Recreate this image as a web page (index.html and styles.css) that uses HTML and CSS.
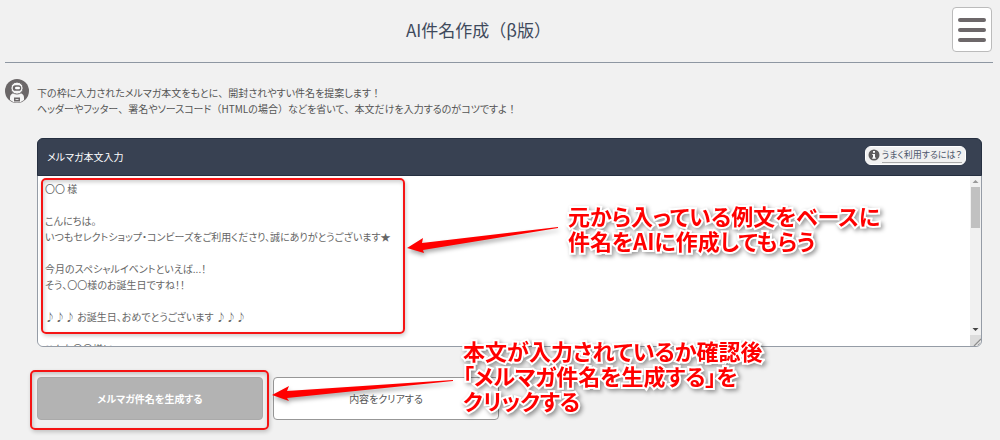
FILE: index.html
```html
<!DOCTYPE html>
<html lang="ja">
<head>
<meta charset="utf-8">
<meta name="viewport" content="width=device-width, initial-scale=1">
<title>AI件名作成（β版）</title>
<link rel="stylesheet" href="styles.css">
</head>
<body>
<header class="topbar">
  <h1 class="title">AI件名作成（β版）</h1>
  <button class="menu" type="button" aria-label="メニュー"><span class="bar"></span><span class="bar"></span><span class="bar"></span></button>
</header>
<main class="content">
  <div class="intro">
    <svg class="robot" viewBox="0 0 24 24" aria-hidden="true">
      <circle cx="12" cy="12" r="12" fill="#6b6768"/>
      <path d="M5 21v-2.500c0-2.600 1.800-4.200 4-4.200h6c2.200 0 4 1.600 4 4.200V21A11 11 0 0 1 5 21z" fill="#f5f5f5"/>
      <rect x="6" y="3.200" width="12" height="11.800" rx="5.600" fill="#f5f5f5" stroke="#6b6768"/>
      <rect x="7.800" y="6.200" width="8.400" height="5.600" rx="2.600" fill="#6b6768"/>
      <rect x="10" y="7.800" width="5" height="2.400" rx="1.200" fill="#fff"/>
      <path d="M9 18.500h6v4H9z" fill="#6b6768"/><path d="M10.500 20.500h3" stroke="#ddd"/>
    </svg>
    <p class="lead">下の枠に入力されたメルマガ本文をもとに<span class="full">、</span>開封されやすい件名を提案します<span class="full">！</span><br>ヘッダーやフッター<span class="full">、</span>署名やソースコード<span class="full">（</span>HTMLの場合<span class="full">）</span>などを省いて<span class="full">、</span>本文だけを入力するのがコツですよ<span class="full">！</span></p>
  </div>
  <section class="form">
    <div class="panel">
      <div class="panel-head">
        <label for="body-text">メルマガ本文入力</label>
        <a class="help" href="#help">
          <svg class="info" viewBox="0 0 12 12" aria-hidden="true"><circle cx="6" cy="6" r="5.500" fill="#5f5d5e"/><path d="M5 2h2v1.700H5zM4.300 5H7v3.500h.8v1.200H4.200V8.500H5V6h-.7z" fill="#fff"/></svg>
          <span class="help-text">うまく利用するには？</span>
        </a>
      </div>
      <div class="edit-row">
        <textarea id="body-text" class="editor" spellcheck="false">〇〇 様

こんにちは。
いつもセレクトショップ・コンビーズをご利用くださり、誠にありがとうございます★

今月のスペシャルイベントといえば...！
そう、〇〇様のお誕生日ですね！！

♪♪♪ お誕生日、おめでとうございます ♪♪♪

こんな〇〇様に、
当店から特別なプレゼントをご用意しました。

お誕生日月の間、
お好きな商品にご利用いただけます。

ぜひこの機会に、
お気に入りの商品を見つけてくださいね。
</textarea>
        <div class="scroller" aria-hidden="true">
          <svg class="step" viewBox="0 0 11 11"><path d="M2.500 7L5.500 4L8.500 7z" fill="#999"/></svg>
          <div class="track"><div class="thumb"></div></div>
          <svg class="step" viewBox="0 0 11 11"><path d="M2.500 4L5.500 7L8.500 4z" fill="#444"/></svg>
          <svg class="grip" viewBox="0 0 11 11"><path d="M0 0h11v6l-5 5H0z" fill="#dcdcdc"/><path d="M4 11L11 4M7.500 11L11 7.500" stroke="#8d8d8d" stroke-width="1.200"/></svg>
        </div>
      </div>
      <div class="mark mark-text"></div>
      <svg class="arrow arrow-text" viewBox="0 0 154 28" aria-hidden="true"><path d="M1 22L17 12L16 17L152 1V2L17 24L18 27z" fill="#f00"/></svg>
      <p class="note note-text">元から入っている例文をベースに<br>件名をAIに作成してもらう</p>
    </div>
    <div class="actions">
      <button class="btn primary" type="button">メルマガ件名を生成する</button>
      <button class="btn" type="button">内容をクリアする</button>
      <div class="mark mark-button"></div>
      <svg class="arrow arrow-button" viewBox="0 0 184 24" aria-hidden="true"><path d="M1 15L18 6L16 11L182 0V1L16 18L18 21z" fill="#f00"/></svg>
      <p class="note note-button">本文が入力されているか確認後<br>「メルマガ件名を生成する」を<br>クリックする</p>
    </div>
  </section>
</main>
</body>
</html>
```
FILE: styles.css
```css
* { box-sizing: border-box; }
body {
  margin: 0;
  background: #f1f1f1;
  color: #555;
  font-family: "Noto Sans CJK JP", "Noto Sans", sans-serif;
  font-feature-settings: "palt";
  font-size: 10px;
  line-height: 16px;
}
button, textarea { font: inherit; font-feature-settings: inherit; color: inherit; }
h1, p { margin: 0; }
.full { font-feature-settings: normal; }

.topbar {
  display: grid;
  grid-template-columns: 40px 1fr 40px;
  align-items: start;
  margin: 0 7px 0 5px;
  padding: 7px 1px 10px 0;
  border-bottom: 1px solid #8e97a2;
}
.title {
  grid-column: 2;
  padding: 11px 40px 0 0;
  text-align: center;
  color: #3f4a5c;
  font-size: 17px;
  line-height: 24px;
  font-weight: 400;
  font-feature-settings: normal;
}
.menu {
  display: flex;
  flex-direction: column;
  align-items: center;
  justify-content: center;
  gap: 6px;
  height: 45px;
  padding: 0;
  background: #fff;
  border: 1px solid #bbb;
  border-radius: 4px;
}
.bar { width: 28px; height: 4px; border-radius: 2px; background: #6d686a; }

.content { padding: 15px 18px 20px 5px; }
.intro { display: flex; gap: 8px; }
.robot { width: 24px; height: 24px; flex: none; margin-top: 1px; }
.lead { padding-top: 7px; }

.form { margin: 21px 0 0 32px; }
.panel {
  position: relative;
  border: 1px solid #959ca6;
  border-radius: 6px;
  background: #fff;
}
.panel-head {
  display: flex;
  align-items: center;
  justify-content: space-between;
  height: 38px;
  margin: -1px -1px 0;
  padding: 0 15px 0 9px;
  border: 1px solid #252f40;
  border-radius: 6px 6px 0 0;
  background: #384152;
  color: #fff;
}
.help {
  display: flex;
  align-items: center;
  gap: 2px;
  height: 19px;
  margin-bottom: 4px;
  padding: 0 3px 0 2px;
  border: 1px solid #fff;
  border-radius: 6px;
  background: #f1f1f1;
  color: #4c576b;
  font-size: 9px;
  text-decoration: none;
}
.help-text { line-height: 14px; border-bottom: 1px solid #aaa; }
.info { width: 12px; height: 12px; }

.edit-row { display: flex; height: 170px; }
.editor {
  flex: 1;
  min-width: 0;
  padding: 5px 7px;
  border: 0;
  border-radius: 0 0 0 6px;
  outline: 0;
  background: #fff;
  color: #666;
  resize: none;
  scrollbar-width: none;
}
.scroller {
  display: flex;
  flex-direction: column;
  width: 11px;
  overflow: hidden;
  border-radius: 0 0 6px 0;
  background: #f1f1f1;
}
.step, .grip { width: 11px; height: 11px; flex: none; }
.track { flex: 1; padding: 0 1px; }
.thumb { height: 30%; background: #c1c1c1; }

.actions {
  position: relative;
  display: grid;
  grid-template-columns: 226px 226px;
  gap: 10px;
  margin-top: 30px;
}
.btn {
  height: 43px;
  padding: 0;
  border: 1px solid #979797;
  border-radius: 4px;
  background: #fff;
}
.primary { border-color: #aaa; background: #b3b3b3; color: #fff; font-weight: 700; }

.mark {
  position: absolute;
  border: 2px solid #f51414;
  border-radius: 5px;
  box-shadow: 1px 2px 4px #0003, inset 1px 2px 4px #0003;
  pointer-events: none;
}
.mark-text { left: 3px; top: 39px; width: 364px; height: 156px; }
.mark-button { left: -7px; top: -7px; width: 239px; height: 60px; }
.arrow { position: absolute; pointer-events: none; filter: drop-shadow(1px 3px 2px #0005); }
.arrow-text { left: 368px; top: 87px; width: 154px; height: 28px; }
.arrow-button { left: 234px; top: 3px; width: 184px; height: 24px; }
.note {
  position: absolute;
  color: #f00;
  font-size: 22px;
  line-height: 25px;
  font-weight: 700;
  white-space: nowrap;
  -webkit-text-stroke: 4px #fff;
  paint-order: stroke fill;
  filter: drop-shadow(2px 2px 2px #0006);
  pointer-events: none;
}
.note-text { left: 530px; top: 64px; }
.note-button { left: 426px; top: -39px; }
```
